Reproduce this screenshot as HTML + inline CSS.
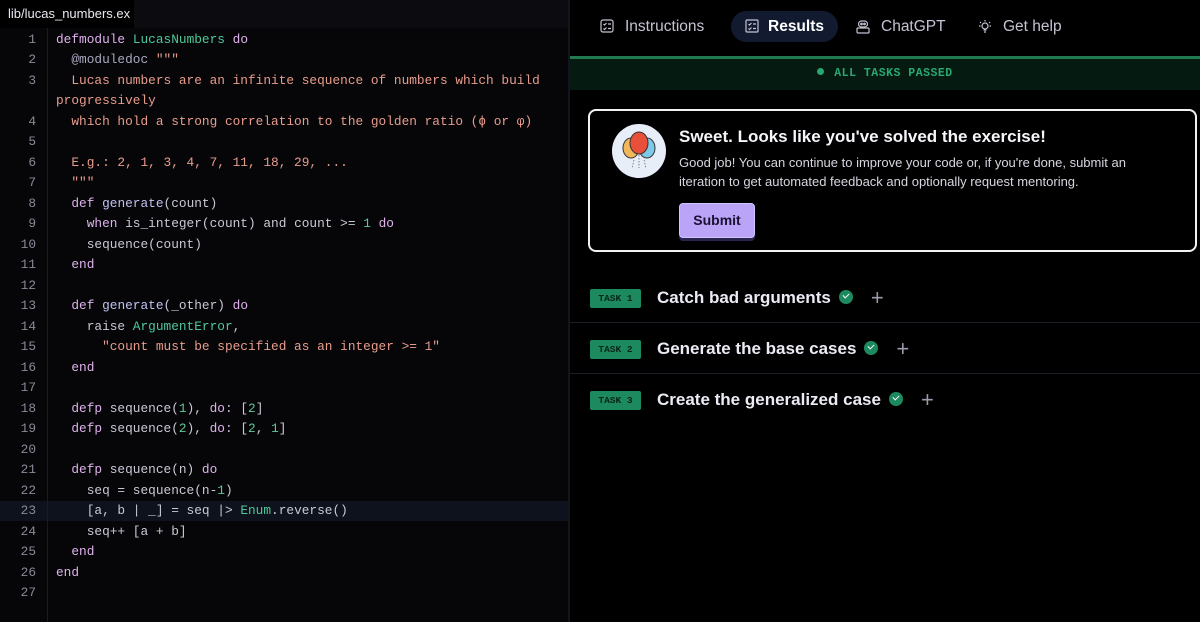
<!DOCTYPE html>
<html><head><meta charset="utf-8"><style>
*{margin:0;padding:0;box-sizing:border-box}
body{width:1200px;height:622px;background:#000;overflow:hidden;position:relative;font-family:"Liberation Sans",sans-serif}
#left{position:absolute;left:0;top:0;width:568px;height:622px;background:#060609}
#tabbar{position:absolute;left:0;top:0;width:568px;height:28px;background:#0b0b10}
#tab{position:absolute;left:0;top:0;width:134px;height:28px;background:#000;color:#e8e8f0;font-size:13px;line-height:28px;padding-left:8px}
#gutter{position:absolute;left:47px;top:28px;width:1px;height:594px;background:#1a1a22}
#hl{position:absolute;left:0;top:501px;width:568px;height:20px;background:#0d121c}
.code{position:absolute;left:0;top:29.5px;font-family:"Liberation Mono",monospace;font-size:12.8px;line-height:20.5px;color:#c9c9d6;white-space:pre}
.ln{position:absolute;left:0;width:36px;text-align:right;color:#8a8a99}
.cl{position:absolute;left:56px}
.k{color:#dfb2ec}.m{color:#4fc89a}.s{color:#e89c8c}.f{color:#c2c2f5}.n{color:#5fc99a}.a{color:#a8a8c0}
#div{position:absolute;left:568px;top:0;width:2px;height:622px;background:#14141c}
#nav{position:absolute;left:570px;top:0;width:630px;height:56px}
.ni{position:absolute;top:11px;height:31px;line-height:31px;font-size:15.5px;color:#c4c4d4}
.ni svg{position:absolute;left:0;top:8px}
#res{background:#111a2e;border-radius:16px;color:#fff;font-weight:bold}
#gline{position:absolute;left:570px;top:56px;width:630px;height:3px;background:#1f7a52}
#banner{position:absolute;left:570px;top:59px;width:630px;height:31px;background:#051a10;text-align:center;line-height:30px;font-family:"Liberation Mono",monospace;font-weight:bold;font-size:11.5px;color:#2aa872;letter-spacing:.5px}
#banner i{display:inline-block;width:7px;height:7px;border-radius:50%;background:#2aa872;margin-right:10px;vertical-align:1px}
#card{position:absolute;left:588px;top:109px;width:609px;height:143px;border:2px solid #f2f2f5;border-radius:8px}
#av{position:absolute;left:22px;top:13px;width:54px;height:54px;border-radius:50%;background:#e8eef8}
#card h2{position:absolute;left:89px;top:16px;font-size:17px;color:#f5f5fa;font-weight:bold}
#card p{position:absolute;left:89px;top:42px;width:490px;font-size:13px;line-height:19px;color:#d6d6e0}
#btn{position:absolute;left:89px;top:92px;width:76px;height:35px;background:#b9a4f7;border-radius:4px;border:1px solid #d0c4ff;color:#1a1030;font-weight:bold;font-size:14px;line-height:33px;text-align:center;box-shadow:0 3px 0 #2b2450}
.task{position:absolute;left:570px;width:630px;height:51px}
.task .b{position:absolute;left:20px;top:18px;width:51px;height:19px;background:#1c8a5e;border-radius:2px;color:#08251a;font-family:"Liberation Mono",monospace;font-weight:bold;font-size:9.5px;text-align:center;line-height:19px}
.task .t{position:absolute;left:87px;top:14px;font-size:17px;font-weight:bold;color:#eceaf5}
.task .c{display:inline-block;width:14px;height:14px;border-radius:50%;background:#1c8a5e;vertical-align:-1px;margin-left:8px;position:relative}
.task .c:after{content:"";position:absolute;left:4px;top:3px;width:5px;height:3px;border-left:1.5px solid #fff;border-bottom:1.5px solid #fff;transform:rotate(-45deg)}
.task .p{display:inline-block;color:#9a9aaa;font-weight:normal;font-size:22px;margin-left:18px;vertical-align:-2px}
.sep{position:absolute;left:570px;width:630px;height:1px;background:#1c1c24}
</style></head><body>
<div id="left">
<div id="tabbar"><div id="tab">lib/lucas_numbers.ex</div></div>
<div id="hl"></div>
<div id="gutter"></div>
<div class="code">
<div class="ln" style="top:0">1</div><div class="cl" style="top:0"><span class="k">defmodule</span> <span class="m">LucasNumbers</span> <span class="k">do</span></div>
<div class="ln" style="top:20.5px">2</div><div class="cl" style="top:20.5px">  <span class="a">@moduledoc</span> <span class="s">"""</span></div>
<div class="ln" style="top:41px">3</div><div class="cl s" style="top:41px">  Lucas numbers are an infinite sequence of numbers which build
progressively</div>
<div class="ln" style="top:82px">4</div><div class="cl s" style="top:82px">  which hold a strong correlation to the golden ratio (ϕ or φ)</div>
<div class="ln" style="top:102.5px">5</div>
<div class="ln" style="top:123px">6</div><div class="cl s" style="top:123px">  E.g.: 2, 1, 3, 4, 7, 11, 18, 29, ...</div>
<div class="ln" style="top:143.5px">7</div><div class="cl s" style="top:143.5px">  """</div>
<div class="ln" style="top:164px">8</div><div class="cl" style="top:164px">  <span class="k">def</span> <span class="f">generate</span>(count)</div>
<div class="ln" style="top:184.5px">9</div><div class="cl" style="top:184.5px">    <span class="k">when</span> is_integer(count) and count &gt;= <span class="n">1</span> <span class="k">do</span></div>
<div class="ln" style="top:205px">10</div><div class="cl" style="top:205px">    sequence(count)</div>
<div class="ln" style="top:225.5px">11</div><div class="cl" style="top:225.5px">  <span class="k">end</span></div>
<div class="ln" style="top:246px">12</div>
<div class="ln" style="top:266.5px">13</div><div class="cl" style="top:266.5px">  <span class="k">def</span> <span class="f">generate</span>(_other) <span class="k">do</span></div>
<div class="ln" style="top:287px">14</div><div class="cl" style="top:287px">    raise <span class="m">ArgumentError</span>,</div>
<div class="ln" style="top:307.5px">15</div><div class="cl s" style="top:307.5px">      "count must be specified as an integer &gt;= 1"</div>
<div class="ln" style="top:328px">16</div><div class="cl" style="top:328px">  <span class="k">end</span></div>
<div class="ln" style="top:348.5px">17</div>
<div class="ln" style="top:369px">18</div><div class="cl" style="top:369px">  <span class="k">defp</span> sequence(<span class="n">1</span>), <span class="k">do:</span> [<span class="n">2</span>]</div>
<div class="ln" style="top:389.5px">19</div><div class="cl" style="top:389.5px">  <span class="k">defp</span> sequence(<span class="n">2</span>), <span class="k">do:</span> [<span class="n">2</span>, <span class="n">1</span>]</div>
<div class="ln" style="top:410px">20</div>
<div class="ln" style="top:430.5px">21</div><div class="cl" style="top:430.5px">  <span class="k">defp</span> sequence(n) <span class="k">do</span></div>
<div class="ln" style="top:451px">22</div><div class="cl" style="top:451px">    seq = sequence(n-<span class="n">1</span>)</div>
<div class="ln" style="top:471.5px">23</div><div class="cl" style="top:471.5px">    [a, b | _] = seq |&gt; <span class="m">Enum</span>.reverse()</div>
<div class="ln" style="top:492px">24</div><div class="cl" style="top:492px">    seq++ [a + b]</div>
<div class="ln" style="top:512.5px">25</div><div class="cl" style="top:512.5px">  <span class="k">end</span></div>
<div class="ln" style="top:533px">26</div><div class="cl" style="top:533px"><span class="k">end</span></div>
<div class="ln" style="top:553.5px">27</div>
</div>
</div>
<div id="div"></div>
<div id="nav">
<div class="ni" style="left:30px;padding-left:25px"><svg width="14" height="14" viewBox="0 0 14 14" fill="none" stroke="#c4c4d4" stroke-width="1.2"><rect x="1" y="1" width="12" height="12" rx="2"/><path d="M3.5 5l1 1 2-2M8 5h3M3.5 9.5l1 1 2-2M8 9.5h3"/></svg>Instructions</div>
<div class="ni" id="res" style="left:161px;padding-left:37px;padding-right:14px"><svg width="14" height="14" viewBox="0 0 14 14" fill="none" stroke="#c4c4d4" stroke-width="1.2" style="left:14px"><rect x="1" y="1" width="12" height="12" rx="1"/><path d="M3.5 5l1 1 2-2M8 5h3M3.5 9.5l1 1 2-2M8 9.5h3"/></svg>Results</div>
<div class="ni" style="left:286px;padding-left:25px"><svg width="14" height="15" viewBox="0 0 14 15" fill="none" stroke="#c4c4d4" stroke-width="1.2"><rect x="2.5" y="2" width="9" height="6" rx="3"/><circle cx="5.5" cy="5" r=".8"/><circle cx="8.5" cy="5" r=".8"/><rect x="1" y="9" width="12" height="5" rx="1"/></svg>ChatGPT</div>
<div class="ni" style="left:408px;padding-left:25px"><svg width="14" height="15" viewBox="0 0 14 15" fill="none" stroke="#c4c4d4" stroke-width="1.2"><circle cx="7" cy="7" r="3"/><path d="M5.5 11h3M6 13h2M7 1v1.5M2 3l1 1M12 3l-1 1M1 7h1.5M11.5 7H13"/></svg>Get help</div>
</div>
<div id="gline"></div>
<div id="banner"><i></i>ALL TASKS PASSED</div>
<div id="card">
<div id="av"><svg width="54" height="54" viewBox="0 0 54 54"><ellipse cx="19" cy="24" rx="8" ry="10" fill="#f0b85a" stroke="#333" stroke-width="1"/><ellipse cx="35" cy="24" rx="8" ry="10" fill="#7ec8e8" stroke="#333" stroke-width="1"/><ellipse cx="27" cy="19" rx="9" ry="11" fill="#e8503a" stroke="#333" stroke-width="1"/><path d="M22 36l-2 8M27 31v13M32 36l2 8" stroke="#666" stroke-width=".8" stroke-dasharray="1.5 1.5"/></svg></div>
<h2>Sweet. Looks like you've solved the exercise!</h2>
<p>Good job! You can continue to improve your code or, if you're done, submit an iteration to get automated feedback and optionally request mentoring.</p>
<div id="btn">Submit</div>
</div>
<div class="task" style="top:271px"><div class="b">TASK 1</div><div class="t">Catch bad arguments<span class="c"></span><span class="p">+</span></div></div>
<div class="sep" style="top:322px"></div>
<div class="task" style="top:322px"><div class="b">TASK 2</div><div class="t">Generate the base cases<span class="c"></span><span class="p">+</span></div></div>
<div class="sep" style="top:373px"></div>
<div class="task" style="top:373px"><div class="b">TASK 3</div><div class="t">Create the generalized case<span class="c"></span><span class="p">+</span></div></div>
</body></html>
